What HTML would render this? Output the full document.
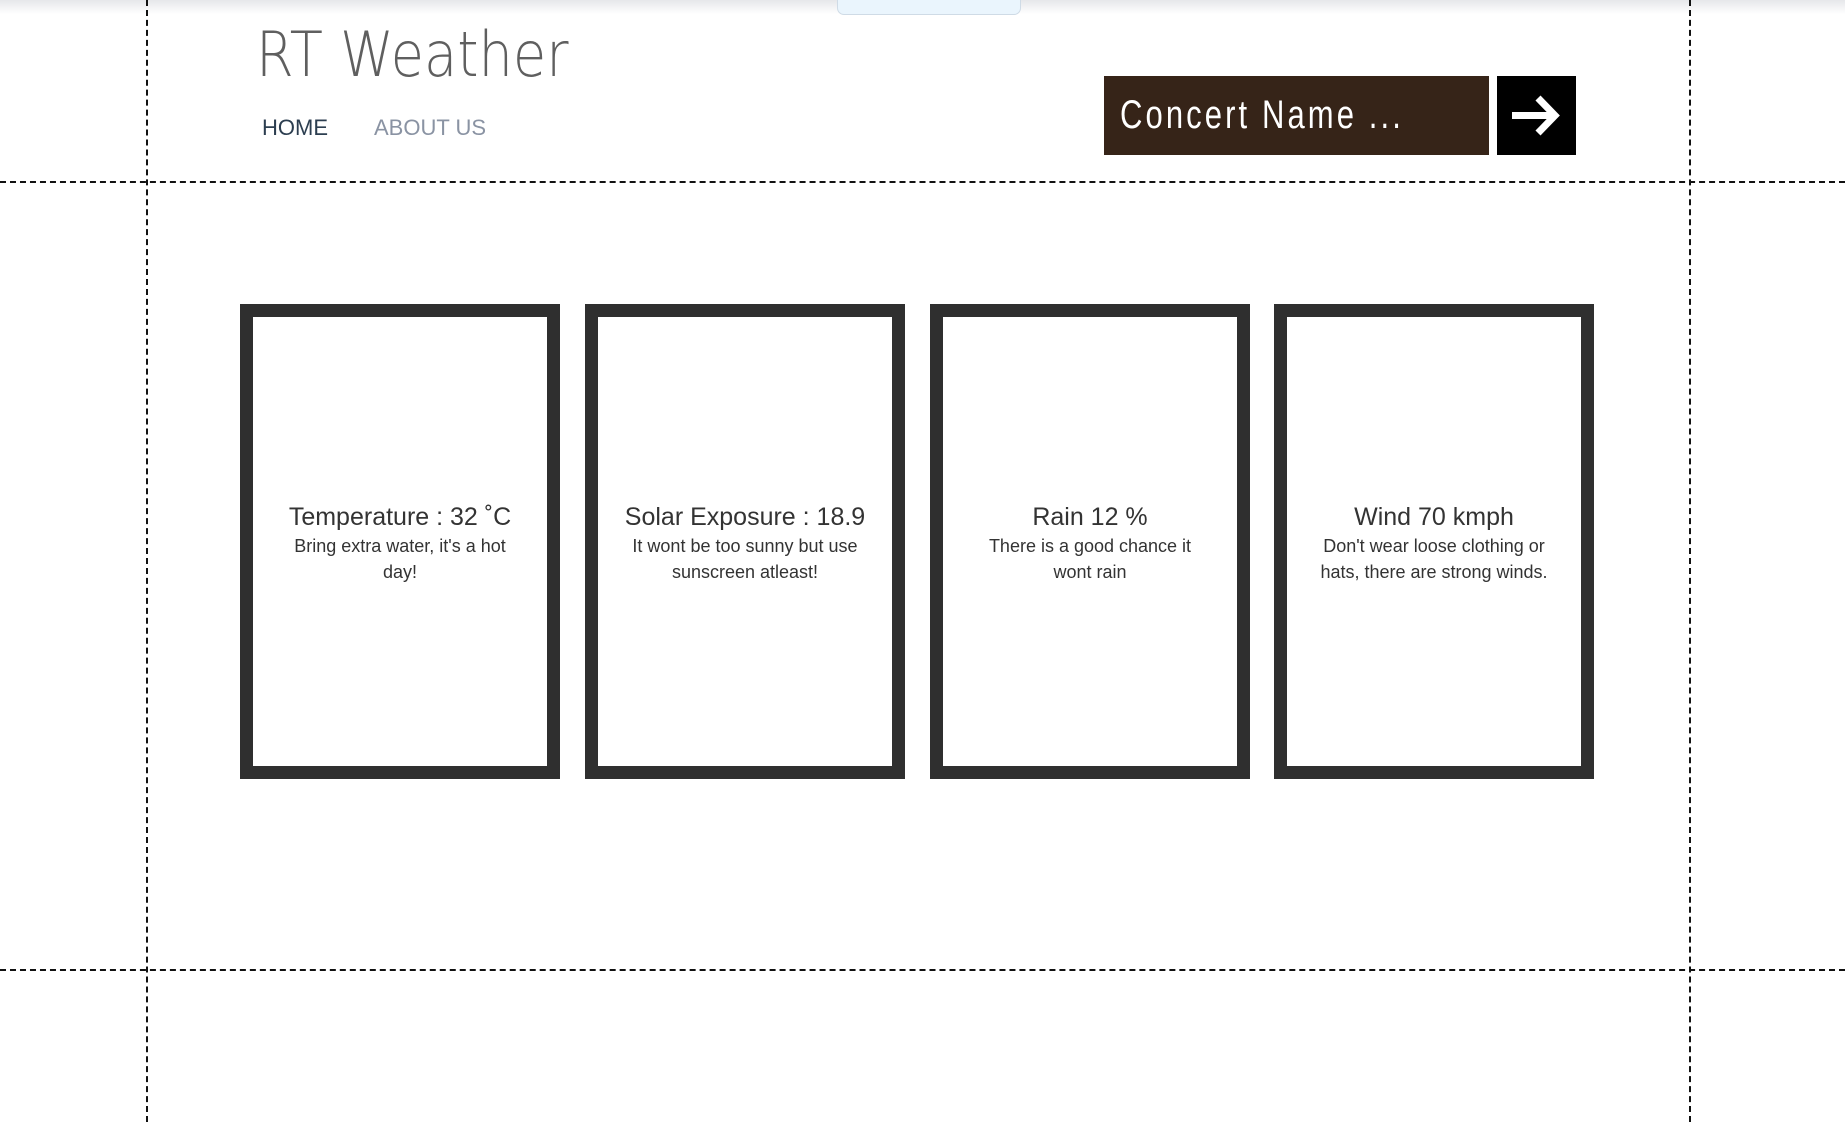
<!DOCTYPE html>
<html><head><meta charset="utf-8"><style>
html,body{margin:0;padding:0;background:#fff;width:1845px;height:1122px;overflow:hidden;position:relative;font-family:"Liberation Sans",sans-serif;}
.topshade{position:absolute;left:0;top:0;width:1845px;height:14px;background:linear-gradient(#e6e7ea,#fff);}
.tab{position:absolute;left:837px;top:-6px;width:182px;height:19px;background:#eaf5fd;border:1px solid #cfdbe6;border-radius:0 0 7px 7px;}
.vl{position:absolute;top:0;height:1122px;width:0;border-left:2px dashed #111;}
.hl{position:absolute;left:0;width:1845px;height:0;border-top:2px dashed #111;}
.title{position:absolute;left:256px;top:18px;font-family:"DejaVu Sans ExtraLight","DejaVu Sans","Liberation Sans",sans-serif;font-weight:200;font-size:62px;color:#5f5f5f;white-space:nowrap;transform:scaleX(0.875);transform-origin:left;}
.nav{position:absolute;top:115px;font-size:22px;white-space:nowrap;}
.search{position:absolute;left:1104px;top:76px;width:385px;height:79px;background:#362418;}
.search span{position:absolute;left:16px;top:17px;color:#fff;font-size:40px;letter-spacing:4px;transform:scaleX(0.775);transform-origin:left;white-space:nowrap;}
.btn{position:absolute;left:1497px;top:76px;width:79px;height:79px;background:#000;}
.card{position:absolute;top:304px;width:294px;height:449px;border:13px solid #2f2f2f;text-align:center;color:#333;}
.card h3{margin:0;position:absolute;left:0;right:0;top:186px;font-weight:normal;font-size:25px;}
.card p{margin:0;position:absolute;left:30px;right:30px;top:216px;font-size:18px;line-height:26px;}
</style></head><body>
<div class="topshade"></div>
<div class="tab"></div>
<div class="vl" style="left:146px"></div>
<div class="vl" style="left:1689px"></div>
<div class="hl" style="top:181px"></div>
<div class="hl" style="top:969px"></div>
<div class="title">RT Weather</div>
<div class="nav" style="left:262px;color:#2c3e50">HOME</div>
<div class="nav" style="left:374px;color:#8a93a3">ABOUT US</div>
<div class="search"><span>Concert Name ...</span></div>
<div class="btn"><svg width="79" height="79" viewBox="0 0 79 79"><path d="M15 39.5H58M41 22L58 39.5L41 57" stroke="#fff" stroke-width="7" fill="none" stroke-linejoin="miter"/></svg></div>
<div class="card" style="left:240px"><h3>Temperature : 32 ˚C</h3><p>Bring extra water, it's a hot day!</p></div>
<div class="card" style="left:585px"><h3>Solar Exposure : 18.9</h3><p>It wont be too sunny but use sunscreen atleast!</p></div>
<div class="card" style="left:930px"><h3>Rain 12 %</h3><p>There is a good chance it wont rain</p></div>
<div class="card" style="left:1274px"><h3>Wind 70 kmph</h3><p>Don't wear loose clothing or hats, there are strong winds.</p></div>
</body></html>
